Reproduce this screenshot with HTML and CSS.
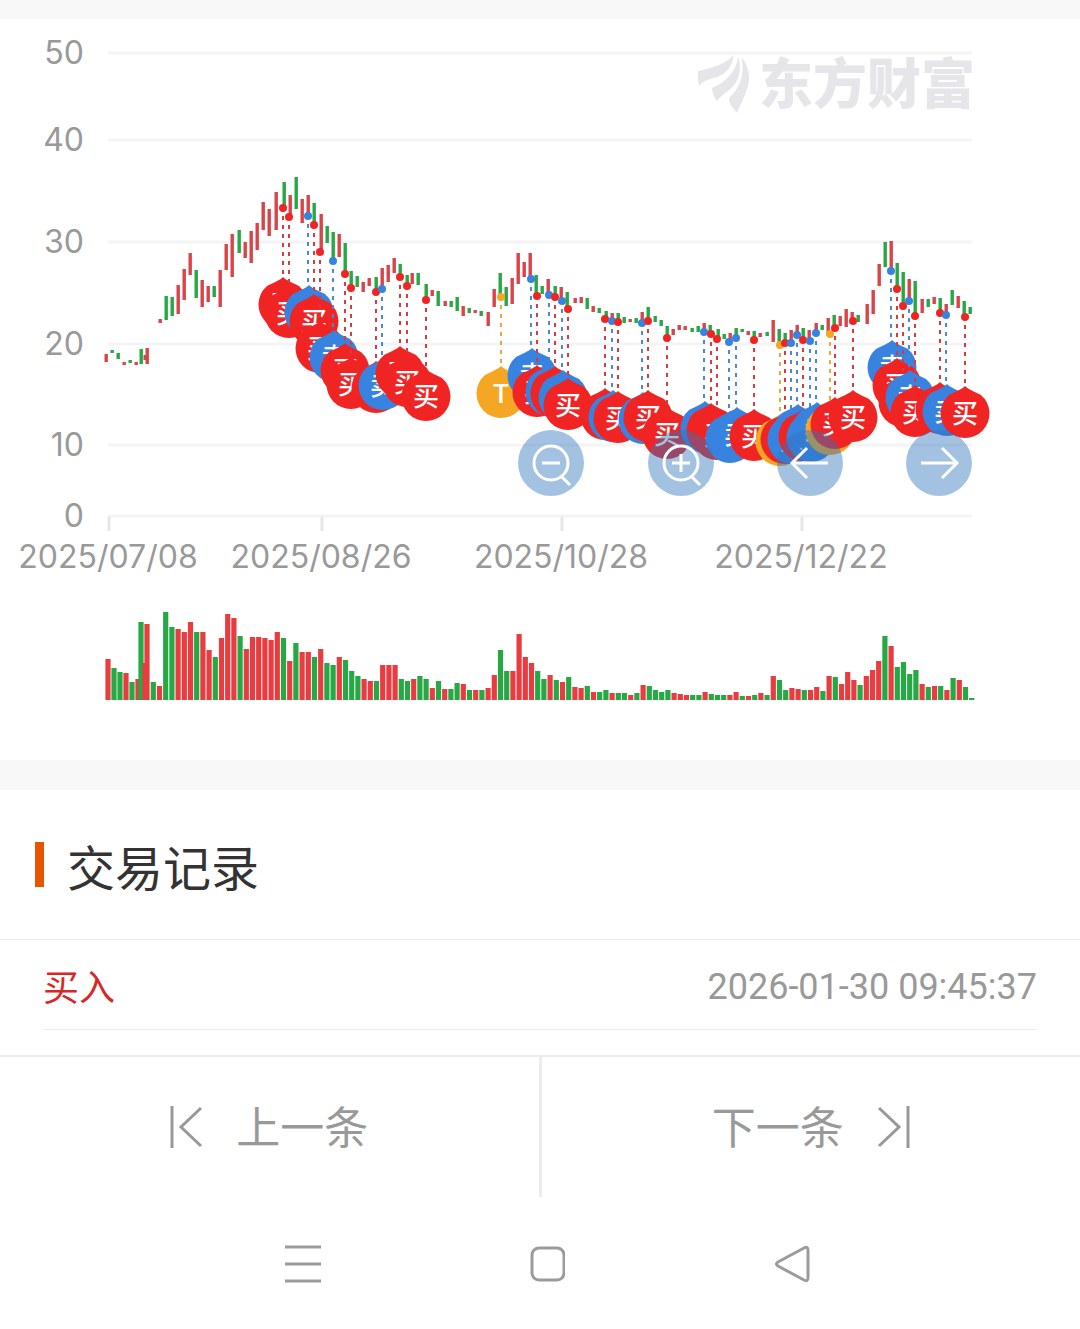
FILE: index.html
```html
<!DOCTYPE html>
<html lang="zh-CN">
<head>
  <meta charset="UTF-8" />
  <meta name="viewport" content="width=device-width, initial-scale=1.0" />
  <title>交易记录</title>
  <link rel="stylesheet" href="styles.css">
</head>
<body>
  <section class="chart-card">
    <svg id="chart" class="chart" viewBox="0 19 1080 741" role="img" aria-label="K线与买卖点">
      <g id="grid"></g>
      <svg x="690" y="48" width="70" height="70" viewBox="0 0 210 210">
        <g class="logo">
          <path d="M24 70C50 62 100 55 131 22C128 60 102 84 70 90C50 95 38 102 28 113C23 100 22 85 24 70Z" />
          <path d="M66 120C108 102 138 70 145 26C158 70 145 108 110 132C98 140 88 150 80 160C72 147 67 135 66 120Z" />
          <path d="M155 28C172 50 179 75 177 98C173 130 155 160 141 194C128 182 118 168 117 150C150 120 165 80 155 28Z" />
        </g>
      </svg>
      <text class="watermark" x="759" y="104">东方财富</text>
      <g id="candles"></g>
      <g id="pins"></g>
      <g id="dots"></g>
      <g id="volume"></g>
    </svg>
    <div class="tools">
      <button class="tool" aria-label="缩小">
        <svg viewBox="0 0 66 66"><circle cx="33" cy="33" r="17" /><path d="M24 33h18M43 46l9 9" /></svg>
      </button>
      <button class="tool" aria-label="放大">
        <svg viewBox="0 0 66 66"><circle cx="33" cy="33" r="17" /><path d="M24 33h18M33 24v18M43 46l9 9" /></svg>
      </button>
      <button class="tool" aria-label="左移">
        <svg viewBox="0 0 66 66"><path d="M51 33H16M30 18L15 33l15 15" /></svg>
      </button>
      <button class="tool" aria-label="右移">
        <svg viewBox="0 0 66 66"><path d="M15 33h35M36 18l15 15-15 15" /></svg>
      </button>
    </div>
  </section>

  <section class="records">
    <h2>交易记录</h2>
    <ul>
      <li>
        <span class="buy">买入</span>
        <time>2026-01-30 09:45:37</time>
      </li>
    </ul>
  </section>

  <nav class="pager">
    <button>
      <svg viewBox="0 0 33 42"><path d="M2 0v42M31 2L11 21l20 19" /></svg>
      <span>上一条</span>
    </button>
    <button>
      <span>下一条</span>
      <svg viewBox="0 0 33 42"><path d="M31 0v42M2 2l20 19L2 40" /></svg>
    </button>
  </nav>

  <footer class="system-bar">
    <button aria-label="菜单"><svg viewBox="0 0 40 40"><path d="M4 3h36M4 20h36M4 37h36" /></svg></button>
    <button aria-label="主页"><svg viewBox="0 0 40 40"><rect x="7" y="4" width="32" height="32" rx="7" /></svg></button>
    <button aria-label="返回"><svg viewBox="0 0 40 40"><path d="M8 18L34 4Q38 2 38 6V34Q38 38 34 36L8 22Q5 20 8 18Z" /></svg></button>
  </footer>

  <script src="chart.js"></script>
</body>
</html>
```
FILE: styles.css
```css
* {
  box-sizing: border-box;
  margin: 0;
  padding: 0;
}

body {
  background: #fff;
  color: #333;
  font-family: Roboto, "Noto Sans CJK SC", sans-serif;
}

button {
  background: none;
  border: none;
  color: inherit;
  font-family: inherit;
  cursor: pointer;
}

.chart-card {
  position: relative;
  border-top: 19px solid #f8f8f8;
  border-bottom: 30px solid #f8f8f8;
}

.chart {
  display: block;
  width: 100%;
  overflow: hidden;
}

.grid-line {
  stroke: #f4f4f5;
  stroke-width: 3;
}

.tick {
  stroke: #e6e6e6;
  stroke-width: 3;
}

.axis-label {
  fill: #999;
  font-family: Inter, sans-serif;
  font-size: 32px;
}

.logo,
.watermark {
  fill: #e6e6ea;
}

.watermark {
  font-family: "Noto Sans CJK SC", sans-serif;
  font-size: 54px;
  font-weight: 900;
}

.up {
  fill: #e93c40;
}

.down {
  fill: #26a844;
}

.candle.up {
  fill: #d9444a;
}

.buy-mark {
  fill: #f12424;
  stroke: #d93a3f;
}

.sell-mark {
  fill: #3883e0;
  stroke: #4a88d2;
}

.t-mark {
  fill: #f5a623;
  stroke: #e5aa3a;
}

.pin,
.dot {
  stroke: none;
}

.lead {
  stroke-width: 2;
  stroke-dasharray: 4 5;
}

.pin-text {
  fill: #fff;
  font-family: Roboto, "Noto Sans CJK SC", sans-serif;
  font-size: 26px;
  font-weight: 500;
  text-anchor: middle;
}

.tools {
  position: absolute;
  top: 55.5%;
  left: 48%;
  right: 10%;
  display: flex;
  justify-content: space-between;
}

.tool {
  width: 66px;
  height: 66px;
  border-radius: 50%;
  background: rgba(46, 115, 188, 0.44);
}

.tool svg {
  display: block;
  fill: none;
  stroke: #fff;
  stroke-width: 3;
}

.records h2 {
  display: flex;
  align-items: center;
  gap: 23px;
  height: 150px;
  padding: 0 35px;
  border-bottom: 1px solid #ececec;
  font-size: 48px;
  font-weight: 400;
}

.records h2::before {
  content: "";
  width: 9px;
  height: 45px;
  background: #e85500;
}

.records ul {
  list-style: none;
  padding: 0 43px 25px;
}

.records li {
  display: flex;
  align-items: center;
  justify-content: space-between;
  height: 90px;
  border-bottom: 1px solid #ececec;
  font-size: 36px;
}

.records .buy {
  color: #d62828;
}

.records time {
  padding-top: 4px;
  color: #999;
}

.pager {
  display: flex;
  border-top: 2px solid #ececec;
}

.pager button {
  flex: 1;
  display: flex;
  align-items: center;
  justify-content: center;
  gap: 33px;
  height: 140px;
  color: #999;
  font-size: 44px;
}

.pager button + button {
  border-left: 3px solid #ececec;
}

.pager span {
  padding-bottom: 4px;
}

.pager svg {
  width: 33px;
  height: 42px;
  fill: none;
  stroke: #999;
  stroke-width: 3;
}

.system-bar {
  display: flex;
  justify-content: space-between;
  padding: 47px 25% 45px 26%;
}

.system-bar svg {
  display: block;
  width: 40px;
  height: 40px;
  fill: none;
  stroke: #9b9b9b;
  stroke-width: 3;
}
```
FILE: chart.js
```js
const NS = 'http://www.w3.org/2000/svg';

function draw(parent, tag, attrs, text) {
  const el = document.createElementNS(NS, tag);
  for (const key in attrs) el.setAttribute(key, attrs[key]);
  if (text) el.textContent = text;
  document.getElementById(parent).appendChild(el);
}

// axes
const levels = [[50, 53], [40, 140], [30, 242], [20, 344], [10, 445], [0, 516]];
levels.forEach(([value, y]) => {
  draw('grid', 'line', { class: 'grid-line', x1: 108, x2: 972, y1: y, y2: y });
  draw('grid', 'text', { class: 'axis-label', x: 84, y: y + 11, 'text-anchor': 'end' }, String(value));
});

const dates = [['2025/07/08', 109], ['2025/08/26', 322], ['2025/10/28', 562], ['2025/12/22', 802]];
dates.forEach(([date, x]) => {
  draw('grid', 'line', { class: 'tick', x1: x, x2: x, y1: 517, y2: 531 });
  draw('grid', 'text', { class: 'axis-label', x: x - 1, y: 568, 'text-anchor': 'middle' }, date);
});

// x, high, low, direction
const candles = `
106 354 362 r,112 350 353 g,118 353 359 g,124 362 365 r,130 360 363 g,136 362 365 r,141 349 364 g,145 355 360 r,147 348 364 r,
160 319 323 r,166 296 320 g,172 297 316 g,178 285 314 r,184 269 300 r,190 253 275 r,196 270 298 g,202 280 307 r,208 286 302 r,
214 286 297 g,220 270 307 r,226 244 270 r,232 234 277 r,239 230 253 g,245 242 258 r,251 231 263 r,257 223 250 r,263 202 230 r,
269 209 236 r,276 192 230 r,284 182 205 g,290 195 215 r,296 177 209 g,302 199 223 r,308 195 214 r,314 203 223 g,321 214 250 r,
327 226 243 g,333 232 258 g,339 234 257 r,345 243 274 g,351 271 286 g,357 276 287 g,363 282 292 r,369 278 286 r,376 277 290 g,
382 268 287 r,388 265 282 r,394 258 273 r,400 264 276 g,407 275 285 g,412 273 284 r,418 273 285 g,426 284 299 g,432 290 296 r,
438 291 306 g,445 301 306 r,451 301 307 g,457 297 311 g,463 306 316 r,469 308 313 g,475 310 313 r,481 311 316 g,488 312 326 r,
494 289 307 r,500 273 296 g,506 287 306 g,512 278 304 r,518 253 284 r,524 262 277 r,530 253 277 r,536 275 294 g,542 286 294 g,
548 279 293 r,555 286 295 g,561 287 299 r,567 292 307 g,575 298 303 r,581 297 303 r,587 298 309 g,593 306 312 r,599 308 313 g,
606 311 317 g,612 313 319 r,618 313 321 g,624 317 323 g,630 319 322 r,636 318 323 g,642 312 322 r,648 307 319 g,655 316 322 g,
661 320 326 g,667 326 336 g,673 329 335 r,679 325 330 r,685 326 330 r,692 328 332 g,698 326 332 g,704 323 331 r,710 325 333 g,
718 329 338 g,724 334 339 g,730 333 340 r,736 328 336 g,742 329 332 g,748 331 335 r,754 331 339 g,760 333 337 r,767 332 336 g,
773 320 342 r,779 329 343 g,785 333 342 g,791 330 341 r,797 325 334 r,803 328 339 g,809 330 339 r,816 323 332 r,822 325 330 g,
828 318 333 r,834 315 327 g,840 316 326 r,846 309 327 r,852 312 320 r,858 315 322 g,867 304 324 r,873 290 314 r,879 264 286 r,
885 242 267 g,891 241 269 r,897 263 288 g,903 272 305 g,909 279 299 r,915 281 315 g,922 299 313 r,928 299 307 g,934 297 304 r,
940 298 312 g,946 304 313 r,952 290 305 g,958 296 308 r,964 301 315 g,970 307 314 g`;

candles.trim().split(',').forEach(item => {
  const [x, high, low, dir] = item.trim().split(' ');
  draw('candles', 'rect', {
    class: 'candle ' + (dir === 'r' ? 'up' : 'down'),
    x: x - 1.5, y: high, width: 3.4, height: low - high
  });
});

// x, price point, B = buy, S = sell, T = both on one day
const trades = `
283 208 B,289 217 B,308 216 S,314 225 B,320 252 B,333 261 S,345 274 B,351 288 B,376 292 B,382 289 S,400 277 B,407 286 B,426 300 B,
501 297 T,531 279 S,537 296 B,549 295 S,555 297 B,562 301 S,568 309 B,605 319 B,612 321 S,618 322 B,642 323 S,648 321 B,667 338 B,
704 332 S,711 334 B,717 339 B,729 342 S,736 338 S,754 340 B,780 345 T,785 343 B,791 343 S,797 335 S,803 340 B,810 341 S,816 333 S,
830 334 T,835 328 B,853 321 B,891 271 S,897 289 B,903 306 B,909 301 S,915 316 B,940 313 B,946 315 S,965 317 B`;

const marks = {
  B: ['buy-mark', '买'],
  S: ['sell-mark', '卖'],
  T: ['t-mark', 'T']
};

trades.trim().split(',').forEach(item => {
  const [px, py, type] = item.trim().split(' ');
  const x = Number(px);
  const y = Number(py);
  const [cls, label] = marks[type];
  const cx = type === 'S' ? x + 1 : x;
  const cy = y + 95;
  draw('pins', 'line', { class: 'lead ' + cls, x1: x, x2: x, y1: y + 8, y2: cy - 24 });
  draw('pins', 'path', {
    class: 'pin ' + cls,
    d: `M${cx} ${cy - 26}c4 4 11 6 16 9a24.5 24.5 0 1 1-32 0c5-3 12-5 16-9z`
  });
  draw('pins', 'text', { class: 'pin-text', x: cx, y: cy + 11 }, label);
  draw('dots', 'circle', { class: 'dot ' + cls, cx: x, cy: y, r: 4 });
});

// volume, first sessions overlap
const early = [[108, 41, 'r'], [114, 32, 'g'], [120, 28, 'g'], [126, 27, 'r'], [132, 18, 'g'], [138, 21, 'r'], [141, 78, 'g'], [147, 76, 'r'], [145, 37, 'r']];
const volumes = `
g18 r14 g88 g73 r71 r68 r78 g68 r68 r50 g43 r62 r86 r82 g64 r51 r63 r63 r62 r60 r68 g62 r39 g57 r48 r48 g43 r51 g37 g35 r43 g40
g29 g24 r21 r19 g19 r35 r35 r35 g21 g19 r21 g24 g21 r12 g19 r11 g11 g17 r16 g10 r10 g10 r12 r25 g50 g29 r29 r66 r43 r37 g29 g21
r25 g20 r18 g23 r13 r12 g14 r8 g8 g10 r7 g7 g7 r5 g7 r15 g14 g10 g8 g10 r7 r6 r5 g5 g5 r8 g6 g5 g5 r5 r8 g4 r4 g5 r7 g5 r24 g20
g10 r12 r11 g10 r10 r13 g9 r24 g23 r16 r28 r20 g15 r24 r30 r39 g64 r54 g33 g38 g26 g30 r16 g13 r14 g14 r10 g22 r20 g13 g2`;

function drawVolume(x, height, dir) {
  draw('volume', 'rect', {
    class: dir === 'r' ? 'up' : 'down',
    x: x - 2.6, y: 700 - height, width: 5.2, height: height
  });
}

early.forEach(([x, height, dir]) => drawVolume(x, height, dir));
volumes.trim().split(/\s+/).forEach((item, i) => {
  drawVolume(153.3 + i * 6.2, Number(item.slice(1)), item[0]);
});
```
